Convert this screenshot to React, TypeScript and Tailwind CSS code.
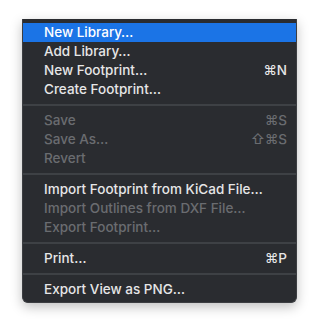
import React from "react";

type Item = { label: string; shortcut?: string; disabled?: boolean; active?: boolean } | "sep";

const items: Item[] = [
  { label: "New Library…", active: true },
  { label: "Add Library…" },
  { label: "New Footprint…", shortcut: "⌘N" },
  { label: "Create Footprint…" },
  "sep",
  { label: "Save", shortcut: "⌘S", disabled: true },
  { label: "Save As…", shortcut: "⇧⌘S", disabled: true },
  { label: "Revert", disabled: true },
  "sep",
  { label: "Import Footprint from KiCad File…" },
  { label: "Import Outlines from DXF File…", disabled: true },
  { label: "Export Footprint…", disabled: true },
  "sep",
  { label: "Print…", shortcut: "⌘P" },
  "sep",
  { label: "Export View as PNG…" },
];

export default function App() {
  return (
    <div
      className="w-[320px] h-[330px] bg-white pt-[19px] pl-[22px]"
      style={{ fontFamily: "Inter, 'Noto Sans', sans-serif" }}
    >
      <div className="w-[275px] bg-[#2a2c30] rounded-b-[6px] border-x border-b border-[#3c3e42] pt-[4px] pb-[3px] shadow-[0_4px_12px_rgba(0,0,0,0.25)]">
        {items.map((it, i) =>
          it === "sep" ? (
            <div key={i} className="h-[12px] flex items-center">
              <div className="w-full h-[2px] bg-[#3e4145]" />
            </div>
          ) : (
            <div
              key={i}
              className={`h-[19px] flex items-center justify-between pl-[21px] pr-[9px] text-[13.5px] font-medium ${
                it.active ? "bg-[#1b74e6] text-white" : it.disabled ? "text-[#6a6c70]" : "text-[#e6e6e7]"
              }`}
            >
              <span>{it.label}</span>
              {it.shortcut && <span>{it.shortcut}</span>}
            </div>
          )
        )}
      </div>
    </div>
  );
}
